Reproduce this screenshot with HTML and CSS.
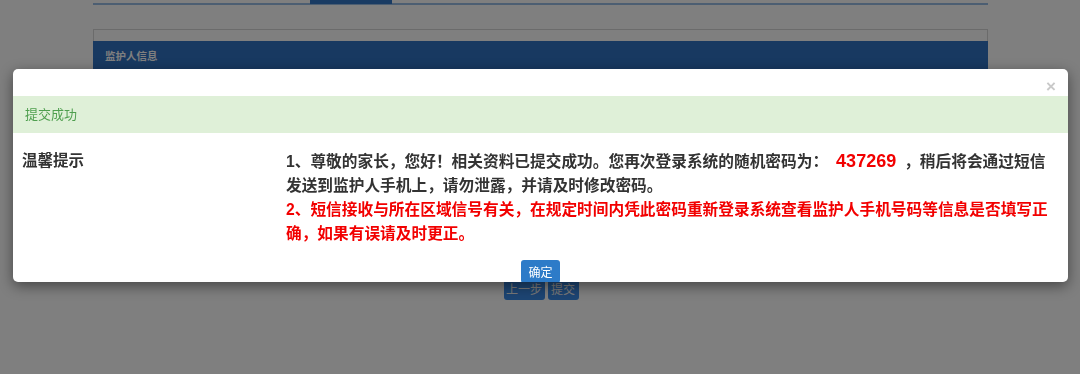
FILE: index.html
```html
<!DOCTYPE html>
<html lang="zh-CN">
<head>
<meta charset="utf-8">
<title>提交成功</title>
<link rel="stylesheet" href="styles.css">
</head>
<body>
<div class="page">
  <div class="nav"><span class="nav-tab"></span></div>
  <div class="panel">
    <div class="panel-strip"></div>
    <div class="panel-heading">监护人信息</div>
    <div class="panel-body"></div>
  </div>
  <div class="actions">
    <button class="btn btn-prev" type="button">上一步</button>
    <button class="btn btn-submit" type="button">提交</button>
  </div>
</div>
<div class="backdrop"></div>
<div class="modal">
  <div class="modal-header"><span class="close">×</span></div>
  <div class="alert">提交成功</div>
  <div class="modal-body">
    <div class="label">温馨提示</div>
    <div class="message">
      <p class="line-dark">1、尊敬的家长，您好！相关资料已提交成功。您再次登录系统的随机密码为：<span class="code"> 437269 </span>，稍后将会通过短信<br>发送到监护人手机上，请勿泄露，并请及时修改密码。</p>
      <p class="line-red">2、短信接收与所在区域信号有关，在规定时间内凭此密码重新登录系统查看监护人手机号码等信息是否填写正<br>确，如果有误请及时更正。</p>
    </div>
  </div>
  <div class="modal-footer"><button class="btn-ok" type="button">确定</button></div>
</div>
</body>
</html>
```

FILE: styles.css
```css
html, body {
  margin: 0;
  padding: 0;
  background: #ffffff;
  width: 1080px;
  height: 374px;
  overflow: hidden;
  font-family: "Liberation Sans", "Noto Sans CJK SC", sans-serif;
}

.page {
  padding: 0 92px 0 93px;
}

.nav {
  display: flex;
  height: 3px;
  border-bottom: 2px solid #98bde4;
}

.nav-tab {
  display: block;
  margin-left: 217px;
  width: 82px;
  height: 4px;
  background: #3276c6;
}

.panel {
  margin-top: 24px;
}

.panel-strip {
  height: 11px;
  border: 1px solid #d6d6d6;
  border-bottom: 0;
  background: #ffffff;
}

.panel-heading {
  height: 30px;
  line-height: 30px;
  padding-left: 12px;
  background: #3172c3;
  color: #ffffff;
  font-size: 10.5px;
  font-weight: bold;
}

.panel-body {
  height: 190px;
}

.actions {
  display: flex;
  justify-content: center;
  gap: 3px;
  margin-top: 16px;
  padding-left: 1px;
}

.btn {
  height: 23px;
  border: 0;
  border-radius: 3px;
  background: #3a8ae6;
  color: #f4f4f4;
  font-family: "Liberation Sans", "Noto Sans CJK SC", sans-serif;
  font-size: 12px;
  padding: 0;
}

.btn-prev { width: 41px; }
.btn-submit { width: 31px; }

.backdrop {
  position: fixed;
  inset: 0;
  background: rgba(0, 0, 0, 0.5);
}

.modal {
  position: absolute;
  left: 13px;
  top: 69px;
  width: 1055px;
  height: 213px;
  background: #ffffff;
  border-radius: 5px;
  overflow: hidden;
  box-shadow: 0 4px 14px rgba(0, 0, 0, 0.45);
}

.modal-header {
  height: 27px;
  display: flex;
  justify-content: flex-end;
  align-items: flex-end;
  padding-right: 12px;
}

.close {
  color: #c9c9c9;
  font-size: 17px;
  font-weight: bold;
  line-height: 17px;
  margin-bottom: 1px;
}

.alert {
  height: 37px;
  line-height: 37px;
  padding-left: 12px;
  background: #dff0d8;
  color: #4f9f4f;
  font-size: 13px;
}

.modal-body {
  display: grid;
  grid-template-columns: 264px 1fr;
  padding: 16px 0 0 9px;
}

.label {
  font-size: 15.5px;
  line-height: 24px;
  color: #333333;
  font-weight: bold;
}

.message {
  font-size: 15.7px;
  line-height: 24px;
  font-weight: bold;
  white-space: nowrap;
}

.message p {
  margin: 0;
}

.line-dark { color: #333333; }
.line-red { color: #f20000; }

.code {
  color: #f20000;
  font-size: 18px;
  padding: 0 3px;
}

.modal-footer {
  display: flex;
  justify-content: center;
  padding-top: 14px;
}

.btn-ok {
  width: 39px;
  height: 23px;
  border: 0;
  border-radius: 3px;
  background: #2d7bc8;
  color: #ffffff;
  font-family: "Liberation Sans", "Noto Sans CJK SC", sans-serif;
  font-size: 12px;
  padding: 0;
}
```
